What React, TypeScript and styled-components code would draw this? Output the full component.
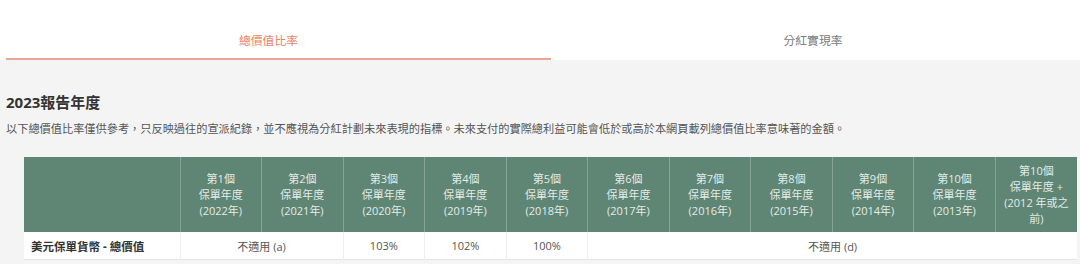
import { createGlobalStyle, styled } from "styled-components";

const GlobalStyle = createGlobalStyle`
  html, body {
    margin: 0;
    padding: 0;
    background: #f4f4f4;
  }
  body {
    font-family: "Open Sans", "Noto Sans CJK TC", sans-serif;
    color: #333;
  }
`;

const years = [
  { n: 1, y: 2022 },
  { n: 2, y: 2021 },
  { n: 3, y: 2020 },
  { n: 4, y: 2019 },
  { n: 5, y: 2018 },
  { n: 6, y: 2017 },
  { n: 7, y: 2016 },
  { n: 8, y: 2015 },
  { n: 9, y: 2014 },
  { n: 10, y: 2013 },
];

const App = () => {
  return (
    <Page>
      <GlobalStyle />
      <Tabs>
        <Tab $active>總價值比率</Tab>
        <Tab>分紅實現率</Tab>
      </Tabs>
      <Content>
        <Heading>2023報告年度</Heading>
        <Note>
          以下總價值比率僅供參考，只反映過往的宣派紀錄，並不應視為分紅計劃未來表現的指標。未來支付的實際總利益可能會低於或高於本網頁載列總價值比率意味著的金額。
        </Note>
        <Table>
          <colgroup>
            <col style={{ width: 156 }} />
            {Array.from({ length: 11 }).map((_, i) => (
              <col key={i} />
            ))}
          </colgroup>
          <thead>
            <tr>
              <HeadCell />
              {years.map((item) => (
                <HeadCell key={item.n}>
                  第{item.n}個
                  <br />
                  保單年度
                  <br />({item.y}年)
                </HeadCell>
              ))}
              <HeadCell>
                第10個
                <br />
                保單年度 +
                <br />
                (2012 年或之
                <br />
                前)
              </HeadCell>
            </tr>
          </thead>
          <tbody>
            <tr>
              <LabelCell>美元保單貨幣 - 總價值</LabelCell>
              <Cell colSpan={2}>不適用 (a)</Cell>
              <Cell>103%</Cell>
              <Cell>102%</Cell>
              <Cell>100%</Cell>
              <Cell colSpan={6}>不適用 (d)</Cell>
            </tr>
          </tbody>
        </Table>
      </Content>
    </Page>
  );
};

const Page = styled.div`
  width: 1080px;
  height: 264px;
  overflow: hidden;
`;

const Tabs = styled.div`
  display: flex;
  background: #fff;
  padding: 0 5px 0 6px;
  height: 60px;
`;

const Tab = styled.div<{ $active?: boolean }>`
  flex: ${(p) => (p.$active ? "0 0 545px" : "1")};
  display: flex;
  align-items: center;
  justify-content: center;
  padding: ${(p) => (p.$active ? "20px 20px 0 0" : "20px 0 0 0")};
  font-size: 11.8px;
  color: ${(p) => (p.$active ? "#e97f68" : "#7a7a7a")};
  border-bottom: 2px solid ${(p) => (p.$active ? "#eba593" : "transparent")};
  box-sizing: border-box;
`;

const Content = styled.div`
  padding: 0 3px 0 6px;
`;

const Heading = styled.h2`
  margin: 32px 0 0;
  font-size: 15px;
  font-weight: 700;
  color: #333;
  line-height: 20px;
`;

const Note = styled.p`
  margin: 9px 0 0;
  font-size: 11.2px;
  line-height: 16px;
  color: #555;
`;

const Table = styled.table`
  margin: 20px 0 0 18px;
  width: 1053px;
  table-layout: fixed;
  border-collapse: collapse;
  background: #fff;
  border-bottom: 1px solid #e4e4e4;
`;

const HeadCell = styled.th`
  background: #5f8575;
  color: #e3ece7;
  font-weight: 400;
  font-size: 11px;
  line-height: 16px;
  padding: 5px 2px;
  height: 75px;
  box-sizing: border-box;
  text-align: center;
  vertical-align: middle;
  border-left: 1px solid #86a397;

  &:first-child {
    border-left: none;
  }
`;

const Cell = styled.td`
  font-size: 11px;
  color: #555;
  text-align: center;
  height: 27px;
  padding: 0;
  border-left: 1px solid #efefef;
`;

const LabelCell = styled.td`
  font-size: 11.5px;
  font-weight: 700;
  color: #333;
  padding: 0 0 0 7px;
  height: 27px;
`;

export default App;
